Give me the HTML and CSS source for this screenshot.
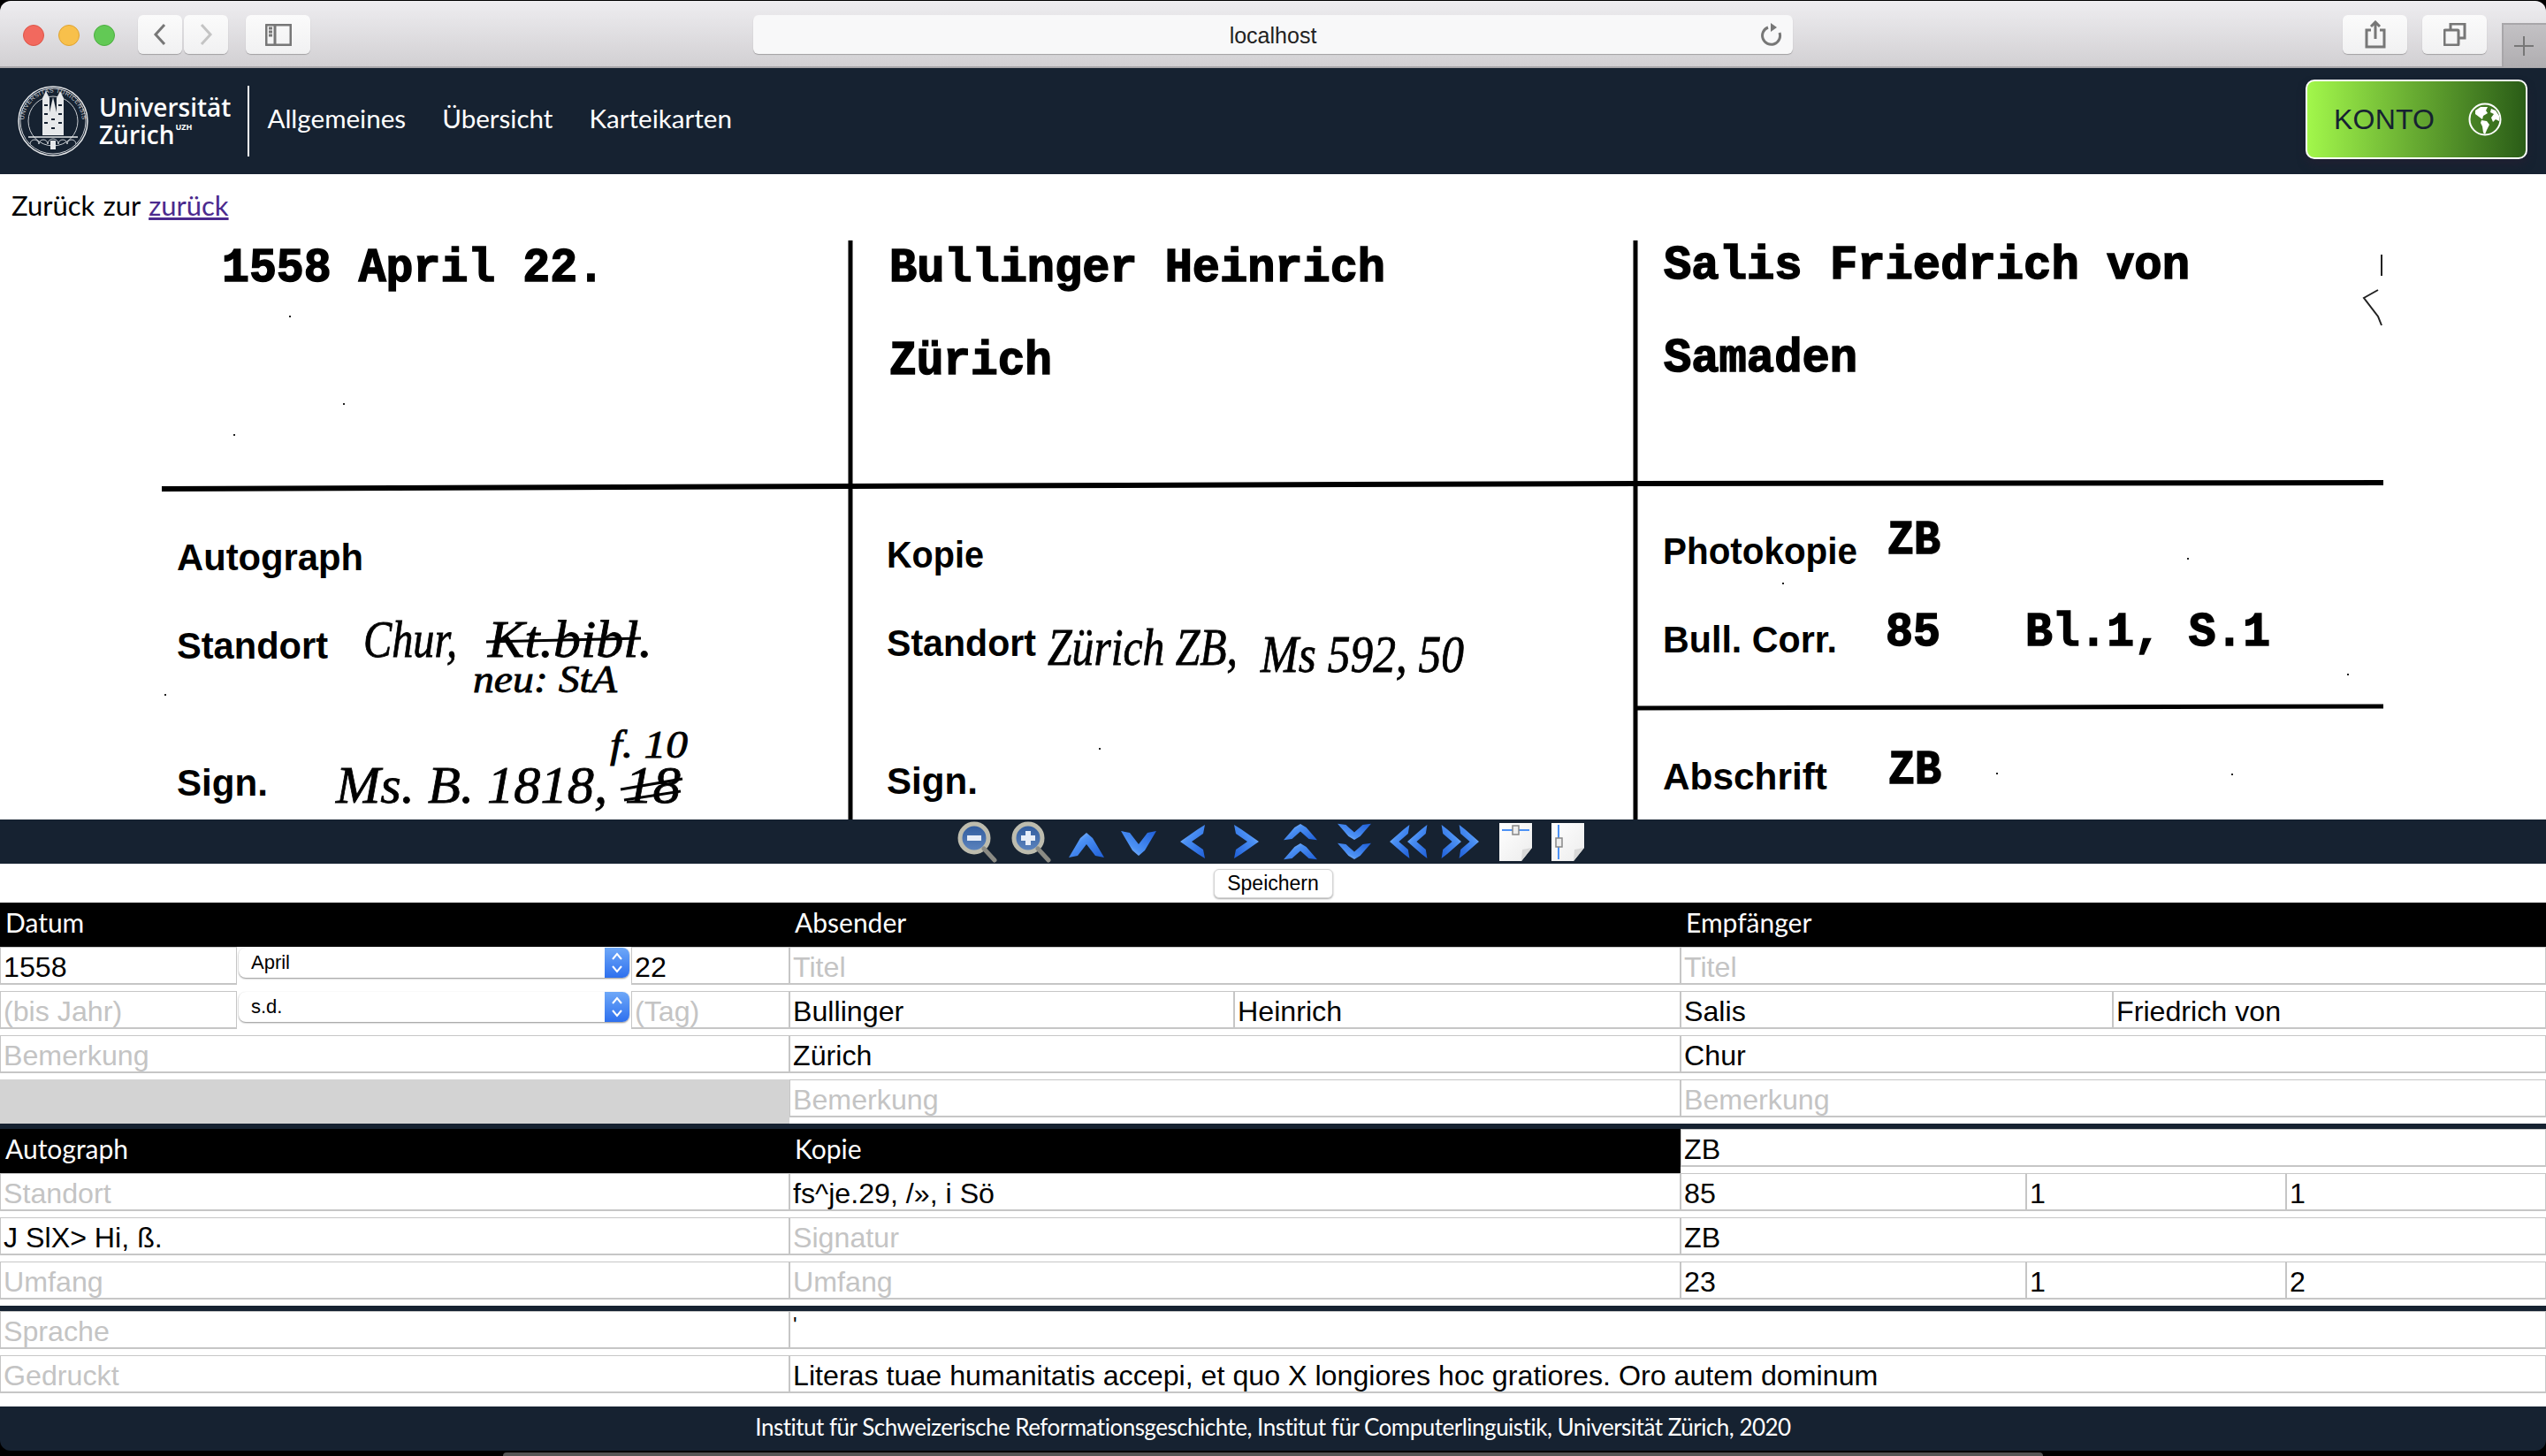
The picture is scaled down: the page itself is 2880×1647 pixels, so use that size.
FILE: index.html
```html
<!DOCTYPE html>
<html lang="de">
<head>
    <meta charset="UTF-8">
    <title>Karteikarten</title>
    <link rel="stylesheet" href="styles.css">
</head>
<body>
    <svg class="svg-defs" aria-hidden="true">
        <defs>
            <linearGradient id="blue-grad" x1="0" y1="0" x2="1" y2="1">
                <stop offset="0" stop-color="#b8d8fb"/>
                <stop offset="0.35" stop-color="#4d92f5"/>
                <stop offset="1" stop-color="#1f5fd8"/>
            </linearGradient>
            <linearGradient id="lens-grad" x1="0" y1="0" x2="0" y2="1">
                <stop offset="0" stop-color="#2f5a9c"/>
                <stop offset="1" stop-color="#5f86c0"/>
            </linearGradient>
            <linearGradient id="page-grad" x1="0" y1="0" x2="1" y2="1">
                <stop offset="0" stop-color="#ffffff"/>
                <stop offset="1" stop-color="#ececec"/>
            </linearGradient>
            <path id="chev-up" d="M20 0 L27 6 L40 28 L30 26 L20 13 L10 26 L0 28 L13 6 Z"/>
            <path id="chev-left" d="M28 0 L26 10 L13 19 L26 28 L28 38 L20 33 L0 19 L20 5 Z"/>
        </defs>
    </svg>

    <div class="browser-bar">
        <div class="lights">
            <span class="light light-red"></span>
            <span class="light light-yellow"></span>
            <span class="light light-green"></span>
        </div>
        <div class="btn-pair">
            <span class="bar-btn nav-btn">
                <svg width="16" height="26" viewBox="0 0 16 26"><path d="M13 2 L3 13 L13 24" class="ico-stroke"/></svg>
            </span>
            <span class="bar-btn nav-btn">
                <svg width="16" height="26" viewBox="0 0 16 26"><path d="M3 2 L13 13 L3 24" class="ico-stroke ico-light"/></svg>
            </span>
        </div>
        <span class="bar-btn wide-btn sidebar-btn">
            <svg width="30" height="25" viewBox="0 0 30 25">
                <rect x="1" y="1" width="28" height="23" rx="1" class="ico-stroke"/>
                <path d="M11 1 V24" class="ico-stroke"/>
                <path d="M4 5 H8 M4 9 H8 M4 13 H8" class="ico-stroke"/>
            </svg>
        </span>
        <div class="url-field">
            <span>localhost</span>
            <svg class="reload" width="24" height="28" viewBox="0 0 24 28">
                <path d="M8 6 A10 10 0 1 0 21 12" class="ico-stroke"/>
                <path d="M11 1 L18 6 L11 11 Z" class="ico-fill"/>
            </svg>
        </div>
        <span class="bar-btn wide-btn share-btn">
            <svg width="24" height="32" viewBox="0 0 24 32">
                <path d="M7 11 H2 V30 H22 V11 H17" class="ico-stroke"/>
                <path d="M12 21 V2 M7 7 L12 2 L17 7" class="ico-stroke"/>
            </svg>
        </span>
        <span class="bar-btn wide-btn tabs-btn">
            <svg width="26" height="26" viewBox="0 0 26 26">
                <rect x="1" y="8" width="16" height="17" rx="1" class="ico-stroke"/>
                <path d="M8 8 V1 H24 V17 H17" class="ico-stroke"/>
            </svg>
        </span>
        <span class="new-tab">
            <svg width="24" height="24" viewBox="0 0 24 24"><path d="M12 1 V23 M1 12 H23" class="ico-stroke ico-thin"/></svg>
        </span>
    </div>

    <header class="site-nav">
        <a class="brand" href="#">
            <svg class="seal" width="80" height="80" viewBox="0 0 80 80">
                <circle cx="40" cy="40" r="39" class="seal-line"/>
                <circle cx="40" cy="40" r="37" class="seal-thin"/>
                <circle cx="40" cy="40" r="28" class="seal-thin"/>
                <path id="seal-ring" d="M9 52 A33 33 0 1 1 71 52" fill="none"/>
                <text class="seal-text"><textPath href="#seal-ring" startOffset="50%" text-anchor="middle">UNIVERSITAS TURICENSIS</textPath></text>
                <path d="M28 56 V14 L32 6 L36 14 V56 Z M44 56 V14 L48 6 L52 14 V56 Z" class="seal-fill"/>
                <path d="M36 56 V30 L40 13 L44 30 V56 Z" class="seal-fill"/>
                <path d="M30 22 H34 M46 22 H50 M30 32 H34 M46 32 H50 M30 42 H34 M46 42 H50 M38 38 H42 M38 48 H42" class="seal-dark"/>
                <path d="M12 58 H68" class="seal-line"/>
                <path d="M14 66 A5 5 0 0 1 24 66 A5 5 0 0 1 34 66 A5 5 0 0 1 46 66 A5 5 0 0 1 56 66 A5 5 0 0 1 66 66" class="seal-thin"/>
                <path d="M37 72 V62 H43 V72 Z" class="seal-fill"/>
            </svg>
            <span class="brand-name">Universität<br>Zürich<sup>UZH</sup></span>
        </a>
        <nav class="main-links">
            <a href="#">Allgemeines</a>
            <a href="#">Übersicht</a>
            <a href="#">Karteikarten</a>
        </nav>
        <a class="konto-btn" href="#">
            <span>KONTO</span>
            <svg width="38" height="38" viewBox="0 0 38 38">
                <circle cx="19" cy="19" r="17.5" fill="none" stroke="#fff" stroke-width="2"/>
                <path d="M8 9 L14 5 L22 5 L20 9 L22 12 L17 15 L16 19 L12 16 L8 13 Z" fill="#fff"/>
                <path d="M15 20 L21 21 L24 25 L21 31 L19 36 L17 34 L16 27 L14 23 Z" fill="#fff"/>
                <path d="M26 7 L31 9 L35 15 L35 21 L31 19 L28 22 L26 17 L29 13 L25 11 Z" fill="#fff"/>
            </svg>
        </a>
    </header>

    <main class="content">
        <p class="back-line">Zurück zur <a href="#">zurück</a></p>

        <svg class="scan" width="2880" height="655" viewBox="0 272 2880 655">
            <path d="M962 271 V927 M1850 271 V927" class="scan-rule"/>
            <path d="M183 553 L962 550 L1850 547 L2696 546" class="scan-rule scan-thick"/>
            <path d="M1850 801 L2696 799" class="scan-rule"/>
            <path d="M2694 288 V312 M2690 328 L2674 337 L2690 358 L2694 368" class="scan-mark"/>
            <path d="M327 358 h2 M388 457 h2 M264 492 h2 M186 786 h2 M1243 847 h2 M2474 632 h2 M2016 660 h2 M2655 763 h2 M2258 875 h2 M2524 876 h2" class="scan-mark"/>

            <text class="scan-type" x="251" y="318" textLength="433" lengthAdjust="spacingAndGlyphs">1558 April 22.</text>
            <text class="scan-type" x="1006" y="318" textLength="561" lengthAdjust="spacingAndGlyphs">Bullinger Heinrich</text>
            <text class="scan-type" x="1006" y="423" textLength="184" lengthAdjust="spacingAndGlyphs">Zürich</text>
            <text class="scan-type" x="1882" y="315" textLength="595" lengthAdjust="spacingAndGlyphs">Salis Friedrich von</text>
            <text class="scan-type" x="1882" y="420" textLength="219" lengthAdjust="spacingAndGlyphs">Samaden</text>

            <text class="scan-label" x="200" y="645" textLength="211" lengthAdjust="spacingAndGlyphs">Autograph</text>
            <text class="scan-label" x="200" y="745" textLength="171" lengthAdjust="spacingAndGlyphs">Standort</text>
            <text class="scan-label" x="200" y="900" textLength="103" lengthAdjust="spacingAndGlyphs">Sign.</text>
            <text class="scan-hand" x="411" y="743" textLength="106" lengthAdjust="spacingAndGlyphs">Chur,</text>
            <text class="scan-hand" x="552" y="743" textLength="186" lengthAdjust="spacingAndGlyphs">Kt.bibl.</text>
            <path d="M550 726 L725 722" class="scan-strike"/>
            <text class="scan-hand scan-small" x="535" y="783" textLength="163" lengthAdjust="spacingAndGlyphs">neu: StA</text>
            <text class="scan-hand" x="380" y="908" textLength="307" lengthAdjust="spacingAndGlyphs">Ms. B. 1818,</text>
            <text class="scan-hand scan-small" x="690" y="857" textLength="88" lengthAdjust="spacingAndGlyphs">f. 10</text>
            <text class="scan-hand" x="707" y="908" textLength="63" lengthAdjust="spacingAndGlyphs">18</text>
            <path d="M702 893 L772 881 M706 905 L770 895" class="scan-strike"/>

            <text class="scan-label" x="1003" y="642" textLength="110" lengthAdjust="spacingAndGlyphs">Kopie</text>
            <text class="scan-label" x="1003" y="742" textLength="169" lengthAdjust="spacingAndGlyphs">Standort</text>
            <text class="scan-label" x="1003" y="898" textLength="103" lengthAdjust="spacingAndGlyphs">Sign.</text>
            <text class="scan-hand" x="1185" y="752" textLength="215" lengthAdjust="spacingAndGlyphs">Zürich ZB,</text>
            <text class="scan-hand" x="1426" y="760" textLength="230" lengthAdjust="spacingAndGlyphs">Ms 592, 50</text>

            <text class="scan-label" x="1881" y="638" textLength="220" lengthAdjust="spacingAndGlyphs">Photokopie</text>
            <text class="scan-type" x="2135" y="626" textLength="60" lengthAdjust="spacingAndGlyphs">ZB</text>
            <text class="scan-label" x="1881" y="738" textLength="197" lengthAdjust="spacingAndGlyphs">Bull. Corr.</text>
            <text class="scan-type" x="2133" y="730" textLength="62" lengthAdjust="spacingAndGlyphs">85</text>
            <text class="scan-type" x="2291" y="730" textLength="277" lengthAdjust="spacingAndGlyphs">Bl.1, S.1</text>
            <text class="scan-label" x="1881" y="893" textLength="186" lengthAdjust="spacingAndGlyphs">Abschrift</text>
            <text class="scan-type" x="2136" y="886" textLength="60" lengthAdjust="spacingAndGlyphs">ZB</text>
        </svg>

        <div class="viewer-tools">
            <svg class="tool" viewBox="0 0 48 48">
                <circle cx="21" cy="20" r="16" class="lens"/>
                <path d="M32 32 L44 45" class="lens-handle"/>
                <path d="M13 20 H29" class="lens-sign"/>
            </svg>
            <svg class="tool" viewBox="0 0 48 48">
                <circle cx="21" cy="20" r="16" class="lens"/>
                <path d="M32 32 L44 45" class="lens-handle"/>
                <path d="M13 20 H29 M21 12 V28" class="lens-sign"/>
            </svg>
            <svg class="tool" viewBox="0 0 48 48"><use href="#chev-up" x="6" y="14" class="chev"/></svg>
            <svg class="tool" viewBox="0 0 48 48"><use href="#chev-up" class="chev" transform="translate(4 40) scale(1 -1)"/></svg>
            <svg class="tool" viewBox="0 0 48 48"><use href="#chev-left" x="10" y="5" class="chev"/></svg>
            <svg class="tool" viewBox="0 0 48 48"><use href="#chev-left" class="chev" transform="translate(38 5) scale(-1 1)"/></svg>
            <svg class="tool" viewBox="0 0 48 48">
                <use href="#chev-up" class="chev" transform="translate(5 4) scale(0.95 0.65)"/>
                <use href="#chev-up" class="chev" transform="translate(5 26) scale(0.95 0.65)"/>
            </svg>
            <svg class="tool" viewBox="0 0 48 48">
                <use href="#chev-up" class="chev" transform="translate(5 22) scale(0.95 -0.65)"/>
                <use href="#chev-up" class="chev" transform="translate(5 44) scale(0.95 -0.65)"/>
            </svg>
            <svg class="tool" viewBox="0 0 48 48">
                <use href="#chev-left" class="chev" transform="translate(3 5) scale(0.8 1)"/>
                <use href="#chev-left" class="chev" transform="translate(23 5) scale(0.8 1)"/>
            </svg>
            <svg class="tool" viewBox="0 0 48 48">
                <use href="#chev-left" class="chev" transform="translate(23 5) scale(-0.8 1)"/>
                <use href="#chev-left" class="chev" transform="translate(43 5) scale(-0.8 1)"/>
            </svg>
            <svg class="tool" viewBox="0 0 48 48">
                <path d="M5 3 H42 V31 L30 46 H5 Z" class="page"/>
                <path d="M42 31 L30 46 L31 33 Z" class="page-fold"/>
                <path d="M8 11 H39" class="fit-arrow"/>
                <rect x="20" y="6" width="7" height="10" class="fit-box"/>
            </svg>
            <svg class="tool" viewBox="0 0 48 48">
                <path d="M3 3 H40 V31 L28 46 H3 Z" class="page"/>
                <path d="M40 31 L28 46 L29 33 Z" class="page-fold"/>
                <path d="M11 5 V44" class="fit-arrow"/>
                <rect x="8" y="20" width="7" height="10" class="fit-box"/>
            </svg>
        </div>

        <div class="save-line"><button class="save-btn" type="button">Speichern</button></div>

        <form class="card-form">
            <div class="cell head">Datum</div>
            <div class="cell head">Absender</div>
            <div class="cell head">Empfänger</div>

            <div class="cell">
                <input class="w-jahr" type="text" value="1558" placeholder="Jahr">
                <span class="select-wrap">
                    <select><option>April</option></select>
                    <span class="select-arrow"><svg width="14" height="26" viewBox="0 0 14 26"><path d="M2 9 L7 3 L12 9 M2 17 L7 23 L12 17"/></svg></span>
                </span>
                <input class="w-tag" type="text" value="22" placeholder="Tag">
            </div>
            <div class="cell"><input type="text" placeholder="Titel"></div>
            <div class="cell"><input type="text" placeholder="Titel"></div>

            <div class="cell">
                <input class="w-jahr" type="text" placeholder="(bis Jahr)">
                <span class="select-wrap">
                    <select><option>s.d.</option></select>
                    <span class="select-arrow"><svg width="14" height="26" viewBox="0 0 14 26"><path d="M2 9 L7 3 L12 9 M2 17 L7 23 L12 17"/></svg></span>
                </span>
                <input class="w-tag" type="text" placeholder="(Tag)">
            </div>
            <div class="cell"><input class="w-name" type="text" value="Bullinger"><input type="text" value="Heinrich"></div>
            <div class="cell"><input class="w-name2" type="text" value="Salis"><input type="text" value="Friedrich von"></div>

            <div class="cell"><input type="text" placeholder="Bemerkung"></div>
            <div class="cell"><input type="text" value="Zürich"></div>
            <div class="cell"><input type="text" value="Chur"></div>

            <div class="cell blank"></div>
            <div class="cell"><input type="text" placeholder="Bemerkung"></div>
            <div class="cell"><input type="text" placeholder="Bemerkung"></div>

            <div class="divider"></div>

            <div class="cell head">Autograph</div>
            <div class="cell head">Kopie</div>
            <div class="cell"><input type="text" value="ZB"></div>

            <div class="cell"><input type="text" placeholder="Standort"></div>
            <div class="cell"><input type="text" value="fs^je.29, /», i Sö"></div>
            <div class="cell"><input class="w-bd" type="text" value="85"><input class="w-nr" type="text" value="1"><input type="text" value="1"></div>

            <div class="cell"><input type="text" value="J SlX&gt; Hi, ß."></div>
            <div class="cell"><input type="text" placeholder="Signatur"></div>
            <div class="cell"><input type="text" value="ZB"></div>

            <div class="cell"><input type="text" placeholder="Umfang"></div>
            <div class="cell"><input type="text" placeholder="Umfang"></div>
            <div class="cell"><input class="w-bd" type="text" value="23"><input class="w-nr" type="text" value="1"><input type="text" value="2"></div>

            <div class="divider"></div>

            <div class="cell"><input type="text" placeholder="Sprache"></div>
            <div class="cell span-2"><input class="input-top" type="text" value="'"></div>

            <div class="cell"><input type="text" placeholder="Gedruckt"></div>
            <div class="cell span-2"><input type="text" value="Literas tuae humanitatis accepi, et quo X longiores hoc gratiores. Oro autem dominum"></div>
        </form>
    </main>

    <footer class="site-footer">Institut für Schweizerische Reformationsgeschichte, Institut für Computerlinguistik, Universität Zürich, 2020</footer>
    <div class="dock-edge"><span></span></div>
</body>
</html>
```

FILE: styles.css
```css
html, body {
    margin: 0;
    padding: 0;
}
body {
    width: 2880px;
    height: 1647px;
    overflow: hidden;
    background-color: #000;
    font-family: "Liberation Sans", Arial, sans-serif;
    color: #000;
}
.svg-defs {
    position: absolute;
    width: 0;
    height: 0;
}

/* browser window bar */
.browser-bar {
    display: flex;
    align-items: flex-start;
    height: 76px;
    margin-top: 1px;
    padding-top: 16px;
    box-sizing: border-box;
    background: linear-gradient(#eeedf0, #d2d0d3);
    border-bottom: 2px solid #a8a6a9;
    border-radius: 12px 12px 0 0;
}
.lights {
    display: flex;
    gap: 16px;
    margin: 11px 26px 0 26px;
}
.light {
    width: 24px;
    height: 24px;
    border-radius: 50%;
    box-sizing: border-box;
}
.light-red {
    background-color: #f2695e;
    border: 1px solid #dd5548;
}
.light-yellow {
    background-color: #f8c04b;
    border: 1px solid #dfa332;
}
.light-green {
    background-color: #62c955;
    border: 1px solid #4cae40;
}
.btn-pair {
    display: flex;
    gap: 2px;
    margin-right: 20px;
}
.bar-btn {
    display: flex;
    align-items: center;
    justify-content: center;
    height: 44px;
    background: linear-gradient(#fbfbfb, #f1f1f2);
    border-radius: 6px;
    box-shadow: 0 1px 1px rgba(0,0,0,0.25);
}
.nav-btn {
    width: 50px;
}
.wide-btn {
    width: 73px;
}
.url-field {
    position: relative;
    display: flex;
    align-items: center;
    justify-content: center;
    box-sizing: border-box;
    width: 1176px;
    height: 44px;
    margin-left: 501px;
    padding-top: 2px;
    background-color: #f8f8f9;
    border-radius: 6px;
    box-shadow: 0 1px 1px rgba(0,0,0,0.25);
    font-size: 25px;
    color: #222;
}
.reload {
    position: absolute;
    right: 12px;
    top: 8px;
}
.share-btn {
    margin-left: 622px;
}
.tabs-btn {
    margin-left: 17px;
}
.new-tab {
    display: flex;
    align-items: center;
    justify-content: center;
    width: 50px;
    height: 50px;
    margin: 9px 0 0 17px;
    padding-right: 3px;
    background: linear-gradient(#c3c1c4, #b0aeb1);
    border-top: 2px solid #a8a6a9;
    border-left: 2px solid #a8a6a9;
    box-sizing: border-box;
}
.ico-stroke {
    fill: none;
    stroke: #777;
    stroke-width: 3;
}
.ico-light {
    stroke: #c4c4c4;
}
.ico-thin {
    stroke-width: 2;
}
.ico-fill {
    fill: #777;
}

/* site navigation */
.site-nav {
    display: flex;
    align-items: center;
    height: 120px;
    padding: 0 21px 0 20px;
    background-color: #162231;
    color: #fff;
}
.brand {
    display: flex;
    align-items: center;
    gap: 12px;
    height: 80px;
    padding-right: 19px;
    border-right: 2px solid #fff;
    color: #fff;
    text-decoration: none;
}
.seal-line {
    fill: none;
    stroke: #e6e8ea;
    stroke-width: 1.5;
}
.seal-thin {
    fill: none;
    stroke: #c9cdd2;
    stroke-width: 1;
}
.seal-fill {
    fill: #e6e8ea;
}
.seal-dark {
    fill: none;
    stroke: #162231;
    stroke-width: 2;
}
.seal-text {
    font-family: "Liberation Sans", Arial, sans-serif;
    font-size: 7px;
    letter-spacing: 0.4px;
    fill: #c9cdd2;
}
.brand-name {
    font-family: "Open Sans", Arial, sans-serif;
    font-weight: 600;
    font-size: 28px;
    line-height: 31px;
}
.brand-name sup {
    font-size: 9px;
    font-weight: 700;
    line-height: 0;
    vertical-align: 16px;
    margin-left: 1px;
}
.main-links {
    display: flex;
    gap: 41px;
    margin-left: 20px;
    padding-bottom: 7px;
    font-family: Lato, Arial, sans-serif;
    font-size: 29.6px;
}
.main-links a {
    color: #fff;
    text-decoration: none;
}
.konto-btn {
    display: flex;
    align-items: center;
    justify-content: space-between;
    box-sizing: border-box;
    width: 251px;
    height: 90px;
    margin: -4px 0 0 auto;
    padding: 0 27px 0 30px;
    background: linear-gradient(to right, #a2f74b, #2a5c17);
    border: 2px solid #fff;
    border-radius: 10px;
    box-shadow: 0 6px 10px rgba(40,30,50,0.5);
    font-size: 32px;
    letter-spacing: 0.2px;
    color: #162231;
    text-decoration: none;
}

/* card area */
.content {
    background-color: #fff;
}
.back-line {
    height: 75px;
    margin: 0;
    padding-left: 13px;
    font-family: Lato, Arial, sans-serif;
    font-size: 31px;
    word-spacing: 1.5px;
    line-height: 71px;
}
.back-line a {
    color: #4b2a8e;
}
.scan {
    display: block;
}
.scan-rule {
    fill: none;
    stroke: #000;
    stroke-width: 5;
}
.scan-thick {
    stroke-width: 6;
}
.scan-mark {
    fill: none;
    stroke: #222;
    stroke-width: 2;
}
.scan-strike {
    fill: none;
    stroke: #000;
    stroke-width: 3;
}
.scan-type {
    font-family: "Liberation Mono", "Courier New", monospace;
    font-weight: 700;
    font-size: 54px;
    stroke: #000;
    stroke-width: 1.6;
}
.scan-label {
    font-family: "Liberation Sans", Arial, sans-serif;
    font-weight: 700;
    font-size: 42px;
}
.scan-hand {
    font-family: "Liberation Serif", "Times New Roman", serif;
    font-style: italic;
    font-size: 60px;
    stroke: #000;
    stroke-width: 0.8;
}
.scan-small {
    font-size: 44px;
}

/* zoom and paging icons */
.viewer-tools {
    display: flex;
    justify-content: center;
    align-items: center;
    gap: 13px;
    height: 50px;
    background-color: #162231;
}
.tool {
    width: 48px;
    height: 48px;
}
.chev {
    fill: url(#blue-grad);
}
.lens {
    fill: url(#lens-grad);
    stroke: #bdbcae;
    stroke-width: 5;
}
.lens-handle {
    fill: none;
    stroke: #8b8b84;
    stroke-width: 5;
    stroke-linecap: round;
}
.lens-sign {
    fill: none;
    stroke: #e8eef8;
    stroke-width: 6;
}
.page {
    fill: url(#page-grad);
}
.page-fold {
    fill: #d8d8d8;
}
.fit-arrow {
    fill: none;
    stroke: #4d92f5;
    stroke-width: 2;
}
.fit-box {
    fill: #eee;
    stroke: #888;
    stroke-width: 1.5;
}

.save-line {
    display: flex;
    justify-content: center;
    align-items: center;
    height: 44px;
}
.save-btn {
    width: 135px;
    height: 33px;
    padding: 0;
    background-color: #fff;
    border: 1px solid #d4d4d4;
    border-radius: 6px;
    box-shadow: 0 1px 2px rgba(0,0,0,0.35);
    font-family: "Liberation Sans", Arial, sans-serif;
    font-size: 23px;
    color: #000;
}

/* form grid */
.card-form {
    display: grid;
    grid-template-columns: 893px 1008px 979px;
    height: 570px;
    align-content: start;
}
.cell {
    display: flex;
    align-items: flex-start;
    height: 50px;
    min-width: 0;
}
.head {
    align-items: center;
    box-sizing: border-box;
    padding: 0 0 6px 6px;
    background-color: #000;
    font-family: Lato, Arial, sans-serif;
    font-size: 30px;
    color: #fff;
}
.blank {
    background-color: #d3d3d3;
}
.divider {
    grid-column: 1 / -1;
    height: 6px;
    background-color: #162231;
}
.span-2 {
    grid-column: span 2;
}
.cell input {
    flex: 1;
    min-width: 0;
    box-sizing: border-box;
    height: 43px;
    margin: 0;
    padding: 4px 2px 0 3px;
    background-color: #fff;
    border: 1px solid #c6c6c6;
    border-bottom-width: 2px;
    border-radius: 0;
    font-family: "Liberation Sans", Arial, sans-serif;
    font-size: 32.2px;
    color: #000;
    outline: none;
}
.cell input::placeholder {
    color: #c4c4c4;
    opacity: 1;
}
.cell .w-jahr {
    flex: 0 0 268px;
}
.cell .w-tag {
    flex: 0 0 179px;
}
.cell .w-name {
    flex: 0 0 503px;
}
.cell .w-name2 {
    flex: 0 0 489px;
}
.cell .w-bd {
    flex: 0 0 391px;
}
.cell .w-nr {
    flex: 0 0 294px;
}
.cell .input-top {
    padding-bottom: 14px;
    font-size: 24px;
}
.select-wrap {
    position: relative;
    flex: 0 0 442px;
    margin: 1px 2px 0;
    height: 34px;
}
.select-wrap select {
    appearance: none;
    width: 100%;
    height: 100%;
    padding: 0 0 1px 14px;
    background-color: #fff;
    border: none;
    border-radius: 8px;
    box-shadow: 0 1px 2px rgba(0,0,0,0.45);
    font-family: "Liberation Sans", Arial, sans-serif;
    font-size: 22px;
    color: #000;
}
.select-arrow {
    position: absolute;
    top: 0;
    right: 0;
    display: flex;
    align-items: center;
    justify-content: center;
    width: 28px;
    height: 34px;
    background: linear-gradient(#6ea8f8, #2e70ee);
    border-radius: 0 8px 8px 0;
}
.select-arrow path {
    fill: none;
    stroke: #fff;
    stroke-width: 2;
}

.site-footer {
    height: 50px;
    background-color: #162231;
    border-radius: 0 0 12px 12px;
    font-family: Lato, Arial, sans-serif;
    font-size: 26px;
    letter-spacing: -0.5px;
    line-height: 47px;
    text-align: center;
    color: #fff;
}
.dock-edge {
    display: flex;
    justify-content: center;
    height: 6px;
    padding: 2px 0 0 0;
    box-sizing: border-box;
}
.dock-edge span {
    width: 1742px;
    background-color: #555;
    border-radius: 6px 6px 0 0;
}
```
